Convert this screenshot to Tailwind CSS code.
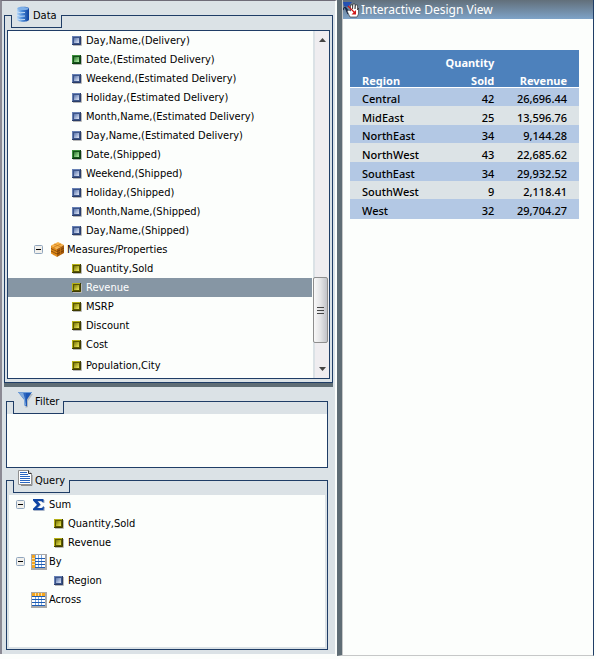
<!DOCTYPE html>
<html lang="en">
<head>
    <meta charset="UTF-8">
    <meta name="viewport" content="width=device-width, initial-scale=1.0">
    <title>Interactive Design View</title>
    <script src="https://cdn.jsdelivr.net/npm/@tailwindcss/browser@4"></script>
</head>
<body class="bg-[#fcfefc] font-['DejaVu_Sans_Condensed','DejaVu_Sans',sans-serif] text-[11px] leading-[19px] text-black">
    <!-- icons -->
    <svg class="absolute size-0">
        <defs>
            <linearGradient id="g-blue" x1="0" x2="1"><stop offset="0" stop-color="#b9d8f5"/><stop offset=".4" stop-color="#4f8fdc"/><stop offset="1" stop-color="#0c3f9c"/></linearGradient>
            <linearGradient id="g-dim" x1="0" x2="1" y1="0" y2="1"><stop offset="0" stop-color="#4a68a6"/><stop offset="1" stop-color="#f0f5ff"/></linearGradient>
            <linearGradient id="g-date" x1="0" x2="1" y1="0" y2="1"><stop offset="0" stop-color="#1d6b20"/><stop offset="1" stop-color="#c4ffb8"/></linearGradient>
            <linearGradient id="g-fact" x1="0" x2="1" y1="0" y2="1"><stop offset="0" stop-color="#6e6a00"/><stop offset="1" stop-color="#fffb60"/></linearGradient>
        </defs>
        <symbol id="dim" viewBox="0 0 10 10">
            <path d="M1 9.500H9.500V1" fill="none" stroke="#b8b8b8"/>
            <rect width="9" height="9" fill="#6780b4"/><path d="M8.500 0V8.500H0" fill="none" stroke="#2a3d68"/>
            <rect x="1.500" y="1.500" width="6" height="6" fill="url(#g-dim)" stroke="#3c5488"/>
        </symbol>
        <symbol id="date" viewBox="0 0 10 10">
            <path d="M1 9.500H9.500V1" fill="none" stroke="#b8b8b8"/>
            <rect width="9" height="9" fill="#3d8f3c"/><path d="M8.500 0V8.500H0" fill="none" stroke="#0b3d10"/>
            <rect x="1.500" y="1.500" width="6" height="6" fill="url(#g-date)" stroke="#14501a"/>
        </symbol>
        <symbol id="fact" viewBox="0 0 10 10">
            <path d="M1 9.500H9.500V1" fill="none" stroke="#b8b8b8"/>
            <rect width="9" height="9" fill="#b5b016"/><path d="M8.500 0V8.500H0" fill="none" stroke="#3d3b00"/>
            <rect x="1.500" y="1.500" width="6" height="6" fill="url(#g-fact)" stroke="#5a5700"/>
        </symbol>
        <symbol id="minus" viewBox="0 0 9 9">
            <rect x=".5" y=".5" width="8" height="8" rx="1" fill="#f1f0ec" stroke="#8fa5bd"/><path d="M2 4.500H7" stroke="#000"/>
        </symbol>
        <symbol id="database" viewBox="0 0 16 16">
            <path d="M2 2.500C2 0 14 0 14 2.500V13.500C14 16.500 2 16.500 2 13.500Z" fill="url(#g-blue)"/>
            <ellipse cx="8" cy="2.500" rx="5.500" ry="1.500" fill="#7fb0e8"/>
            <path d="M1 5.500Q5 7.500 10 6.500M1 9Q5 11 10 10M1 12.500Q5 14.500 10 13.500" fill="none" stroke="#cfe3f8" stroke-width=".9"/>
        </symbol>
        <symbol id="boxes" viewBox="0 0 13 15">
            <path d="M0 3.500L7 0L13 3L6 7Z" fill="#f7b24a"/><path d="M0 3.500L6 7V15L0 11.500Z" fill="#e58f1c"/><path d="M6 7L13 3V11L6 15Z" fill="#a85c0a"/>
            <path d="M0 6.500L6 9.500L13 6M0 9L6 12L13 8.500" fill="none" stroke="#6e3a04" stroke-width=".8"/><path d="M3 2L10 5M3 5V13.200M10 2L3 5M9.500 5V13" fill="none" stroke="#c87a18" stroke-width=".7"/>
        </symbol>
        <symbol id="funnel" viewBox="0 0 16 16">
            <path d="M3 2H16L11 9V15L8.500 16V9Z" fill="#b4bbc0"/>
            <path d="M1 0H15L10 7.500V14.500L7 13V7.500Z" fill="#1d57b4"/><path d="M1 0H8L9 13.500L7 13V7.500Z" fill="#7fa9dc"/><path d="M6 0H9V12L8 7Z" fill="#2c66bf"/><path d="M1 .5H15" stroke="#6d9cd6"/>
        </symbol>
        <symbol id="page" viewBox="0 0 15 17">
            <path d="M3 15.500H14V5" fill="none" stroke="#8a8a8a"/>
            <path d="M.5.500H10.500L13.500 3.500V14.500H.5Z" fill="#fff" stroke="#909090"/><path d="M10.500.500V3.500H13.500" fill="#ddd" stroke="#333"/>
            <path d="M2 2.500H9M2 4.500H10M2 6.500H12M2 8.500H12M2 10.500H12M2 12.500H12" stroke="#2a66c0"/>
        </symbol>
        <symbol id="sigma" viewBox="0 0 12 12">
            <path d="M1 1H11.500V4H10Q9.500 2.500 8 2.500H5L8 6L4.500 9.500H8.500Q10 9.500 10.500 8H12L11.500 12H.5V10.500L4.500 6.500L1 2.200Z" fill="#a8b4c8"/>
            <path d="M0 0H10.500V3.200H9.500Q9 2 7.500 2H4.500L7.500 5.500L4 9H8Q9.500 9 10 7.500H11L10.500 11H0V9.800L4 5.800L0 1.400Z" fill="#0f45a4"/>
        </symbol>
        <symbol id="grid" viewBox="0 0 16 16">
            <path d="M0 15H15V0" fill="none" stroke="#a9a9a9" stroke-width="2"/>
            <rect x=".5" y=".5" width="14" height="14" fill="#fff" stroke="#a9a9a9"/>
            <path d="M4.500 1V14M7.500 1V14M10.500 1V14" stroke="#7ba7dc"/><path d="M1 4.500H14M1 7.500H14M1 10.500H14M1 13.500H14" stroke="#1d5cb4"/>
        </symbol>
    </svg>

    <div class="flex min-h-screen">
        <aside class="flex w-[337px] shrink-0 flex-col">
            <div class="flex flex-1 flex-col border-t border-r-2 border-l-2 border-t-[#6f6c78] border-r-[#fcfefc] border-l-[#8b8a94] bg-[#dbe2e6] pt-[14px] pb-1">
                <!-- Data -->
                <section class="mr-[2px] ml-[2px] border-b-4 border-[#5f6d75]">
                    <div class="flex h-[13px]">
                        <div class="w-[7px] border-t border-l border-[#1f3d66]"></div>
                        <h2 class="flex items-end gap-[2px] border-r border-b border-l border-[#1f3d66] pr-1 pb-[2px] pl-[3px]">
                            <svg class="mb-[3px] size-4"><use href="#database"/></svg>Data
                        </h2>
                        <div class="flex-1 border-t border-r border-[#1f3d66]"></div>
                    </div>
                    <div class="border-r border-b border-l border-[#1f3d66] px-[2px] pt-[2px] pb-[3px]">
                        <div class="flex border border-[#1f3d66] bg-[#fcfefc]">
                            <ul class="flex-1 pb-[3px]">
                                <li class="flex h-[19px] items-center gap-1 pl-16"><svg class="size-[10px]"><use href="#dim"/></svg>Day,Name,(Delivery)</li>
                                <li class="flex h-[19px] items-center gap-1 pl-16"><svg class="size-[10px]"><use href="#date"/></svg>Date,(Estimated Delivery)</li>
                                <li class="flex h-[19px] items-center gap-1 pl-16"><svg class="size-[10px]"><use href="#dim"/></svg>Weekend,(Estimated Delivery)</li>
                                <li class="flex h-[19px] items-center gap-1 pl-16"><svg class="size-[10px]"><use href="#dim"/></svg>Holiday,(Estimated Delivery)</li>
                                <li class="flex h-[19px] items-center gap-1 pl-16"><svg class="size-[10px]"><use href="#dim"/></svg>Month,Name,(Estimated Delivery)</li>
                                <li class="flex h-[19px] items-center gap-1 pl-16"><svg class="size-[10px]"><use href="#dim"/></svg>Day,Name,(Estimated Delivery)</li>
                                <li class="flex h-[19px] items-center gap-1 pl-16"><svg class="size-[10px]"><use href="#date"/></svg>Date,(Shipped)</li>
                                <li class="flex h-[19px] items-center gap-1 pl-16"><svg class="size-[10px]"><use href="#dim"/></svg>Weekend,(Shipped)</li>
                                <li class="flex h-[19px] items-center gap-1 pl-16"><svg class="size-[10px]"><use href="#dim"/></svg>Holiday,(Shipped)</li>
                                <li class="flex h-[19px] items-center gap-1 pl-16"><svg class="size-[10px]"><use href="#dim"/></svg>Month,Name,(Shipped)</li>
                                <li class="flex h-[19px] items-center gap-1 pl-16"><svg class="size-[10px]"><use href="#dim"/></svg>Day,Name,(Shipped)</li>
                                <li class="flex h-[19px] items-center gap-[3px] pl-[26px]">
                                    <button aria-label="Collapse Measures/Properties"><svg class="size-[9px]"><use href="#minus"/></svg></button>
                                    <svg class="ml-[5px] h-[15px] w-[13px]"><use href="#boxes"/></svg>Measures/Properties
                                </li>
                                <li class="flex h-[19px] items-center gap-1 pl-16"><svg class="size-[10px]"><use href="#fact"/></svg>Quantity,Sold</li>
                                <li class="flex h-[19px] items-center gap-1 bg-[#8696a4] pl-16 text-white"><svg class="size-[10px]"><use href="#fact"/></svg>Revenue</li>
                                <li class="flex h-[19px] items-center gap-1 pl-16"><svg class="size-[10px]"><use href="#fact"/></svg>MSRP</li>
                                <li class="flex h-[19px] items-center gap-1 pl-16"><svg class="size-[10px]"><use href="#fact"/></svg>Discount</li>
                                <li class="flex h-[19px] items-center gap-1 pl-16"><svg class="size-[10px]"><use href="#fact"/></svg>Cost</li>
                                <li class="mt-[2px] flex h-[19px] items-center gap-1 pl-16"><svg class="size-[10px]"><use href="#fact"/></svg>Population,City</li>
                            </ul>
                            <!-- scroll bar -->
                            <div class="ml-px flex w-4 flex-col border-l-2 border-[#dbe2e6] bg-[#efedf0]">
                                <button aria-label="Scroll up" class="flex h-[17px] items-center justify-center"><svg class="h-1 w-[7px]" viewBox="0 0 7 4"><path d="M3.500 0L7 4H0Z" fill="#444"/></svg></button>
                                <div class="flex-1"></div>
                                <div class="-ml-[2px] flex h-[66px] w-[15px] flex-col items-center justify-center gap-[2px] rounded-[2px] border border-[#8e8e8e] bg-linear-to-r from-[#f8f8f8] via-[#e4e4e6] to-[#c2c3c9]">
                                    <div class="h-px w-[7px] bg-[#444]"></div>
                                    <div class="h-px w-[7px] bg-[#444]"></div>
                                    <div class="h-px w-[7px] bg-[#444]"></div>
                                </div>
                                <button aria-label="Scroll down" class="mt-[18px] mb-[1px] flex h-4 items-center justify-center"><svg class="h-1 w-[7px]" viewBox="0 0 7 4"><path d="M0 0H7L3.500 4Z" fill="#444"/></svg></button>
                            </div>
                        </div>
                    </div>
                </section>

                <!-- Filter -->
                <section class="mt-[14px] mr-[7px] ml-1">
                    <div class="flex h-[13px]">
                        <div class="w-[7px] border-t border-l border-[#1f3d66]"></div>
                        <h2 class="flex items-end gap-[2px] border-r border-b border-l border-[#1f3d66] pr-1 pb-[2px] pl-[3px]">
                            <svg class="mb-[3px] size-4"><use href="#funnel"/></svg>Filter
                        </h2>
                        <div class="flex-1 border-t border-r border-[#1f3d66]"></div>
                    </div>
                    <div class="h-[54px] border-r border-b border-l border-[#1f3d66] bg-[#fcfefc]"></div>
                </section>

                <!-- Query -->
                <section class="mt-3 mr-[7px] ml-1 flex flex-1 flex-col">
                    <div class="flex h-[13px]">
                        <div class="w-[7px] border-t border-l border-[#1f3d66]"></div>
                        <h2 class="flex items-end gap-[2px] border-r border-b border-l border-[#1f3d66] px-1 pb-[2px]">
                            <svg class="mb-[3px] h-[17px] w-[15px]"><use href="#page"/></svg>Query
                        </h2>
                        <div class="flex-1 border-t border-r border-[#1f3d66]"></div>
                    </div>
                    <div class="flex flex-1 flex-col border-r border-b border-l border-[#1f3d66] p-[2px]">
                        <ul class="flex-1 bg-[#fcfefc]">
                            <li class="flex h-[19px] items-center pl-[7px]">
                                <button aria-label="Collapse Sum"><svg class="size-[9px]"><use href="#minus"/></svg></button>
                                <svg class="ml-2 size-3"><use href="#sigma"/></svg><span class="ml-1">Sum</span>
                            </li>
                            <li class="flex h-[19px] items-center gap-1 pl-[45px]"><svg class="size-[10px]"><use href="#fact"/></svg>Quantity,Sold</li>
                            <li class="flex h-[19px] items-center gap-1 pl-[45px]"><svg class="size-[10px]"><use href="#fact"/></svg>Revenue</li>
                            <li class="flex h-[19px] items-center pl-[7px]">
                                <button aria-label="Collapse By"><svg class="size-[9px]"><use href="#minus"/></svg></button>
                                <svg class="ml-[6px] size-4" viewBox="0 0 16 16"><use href="#grid"/><path d="M1 1H4V14H1Z" fill="#f5a51d"/><path d="M1 4.500H4M1 7.500H4M1 10.500H4" stroke="#fbe0a8"/></svg><span class="ml-[2px]">By</span>
                            </li>
                            <li class="flex h-[19px] items-center gap-1 pl-[45px]"><svg class="size-[10px]"><use href="#dim"/></svg>Region</li>
                            <li class="flex h-[19px] items-center pl-[22px]">
                                <svg class="size-4" viewBox="0 0 16 16"><use href="#grid"/><path d="M1 1H14V4H1Z" fill="#f5a51d"/><path d="M4.500 1V4M7.500 1V4M10.500 1V4" stroke="#fbe0a8"/></svg><span class="ml-[2px]">Across</span>
                            </li>
                        </ul>
                    </div>
                </section>
            </div>
            <div class="h-[5px]"></div>
        </aside>

        <main class="mr-[2px] mb-[3px] flex-1 border-r border-b border-l-5 border-r-[#1f3d66] border-b-[#c6c8c8] border-l-[#5f6d75]">
            <h1 class="flex h-[19px] items-center gap-[2px] border-l border-[#c6c8c8] bg-linear-to-b from-[#626f7a] to-[#7ea3c8] font-['Noto_Sans',sans-serif] text-[12px] text-white">
                <svg class="h-4 w-4" viewBox="0 0 16 16">
                    <path d="M0 0H9L5 5L1 4Z" fill="#2450b4"/><path d="M0 8Q2 2 5 9M2 5L5 12" fill="none" stroke="#15264c" stroke-width="1.200"/>
                    <path d="M7 15L4 9L6 8L7.500 9V3H9.500V7L10 2H12V7L12.500 3H14.500V8L15.500 6V12L14 15Z" fill="#fff" stroke="#222" stroke-width=".6"/>
                    <path d="M5 4L12 11" fill="none" stroke="#d01818" stroke-width="1.200"/><path d="M13 8V12.500H8.500Z" fill="#d01818"/>
                </svg>
                Interactive Design View
            </h1>
            <div class="h-[calc(100%-19px)] border-l border-[#c6c8c8] pt-[31px] pr-[14px] pl-[7px]">
                <table class="w-full table-fixed border-collapse font-['Noto_Sans',sans-serif] leading-[14px]">
                    <colgroup>
                        <col class="w-[41%]">
                        <col class="w-[22%]">
                        <col class="w-[37%]">
                    </colgroup>
                    <thead class="bg-[#4d81bc] leading-[12px] font-semibold text-white">
                        <tr class="h-[19px]">
                            <th></th>
                            <th class="pt-[7px] text-right">Quantity</th>
                            <th></th>
                        </tr>
                        <tr class="h-[18px] border-b border-white">
                            <th class="pt-[6px] pl-3 text-left">Region</th>
                            <th class="pt-[6px] text-right">Sold</th>
                            <th class="pt-[6px] pr-3 text-right">Revenue</th>
                        </tr>
                    </thead>
                    <tbody class="text-right font-medium">
                        <tr class="h-[18px] bg-[#b3c8e4]"><td class="pt-1 pl-3 text-left">Central</td><td class="pt-1">42</td><td class="pt-1 pr-3">26,696.44</td></tr>
                        <tr class="h-[19px] bg-[#dce3e6]"><td class="pt-1 pl-3 text-left">MidEast</td><td class="pt-1">25</td><td class="pt-1 pr-3">13,596.76</td></tr>
                        <tr class="h-[18px] bg-[#b3c8e4]"><td class="pt-1 pl-3 text-left">NorthEast</td><td class="pt-1">34</td><td class="pt-1 pr-3">9,144.28</td></tr>
                        <tr class="h-[19px] bg-[#dce3e6]"><td class="pt-1 pl-3 text-left">NorthWest</td><td class="pt-1">43</td><td class="pt-1 pr-3">22,685.62</td></tr>
                        <tr class="h-[19px] bg-[#b3c8e4]"><td class="pt-1 pl-3 text-left">SouthEast</td><td class="pt-1">34</td><td class="pt-1 pr-3">29,932.52</td></tr>
                        <tr class="h-[18px] bg-[#dce3e6]"><td class="pt-1 pl-3 text-left">SouthWest</td><td class="pt-1">9</td><td class="pt-1 pr-3">2,118.41</td></tr>
                        <tr class="h-[20px] bg-[#b3c8e4]"><td class="pt-1 pl-3 text-left">West</td><td class="pt-1">32</td><td class="pt-1 pr-3">29,704.27</td></tr>
                    </tbody>
                </table>
            </div>
        </main>
    </div>
</body>
</html>
